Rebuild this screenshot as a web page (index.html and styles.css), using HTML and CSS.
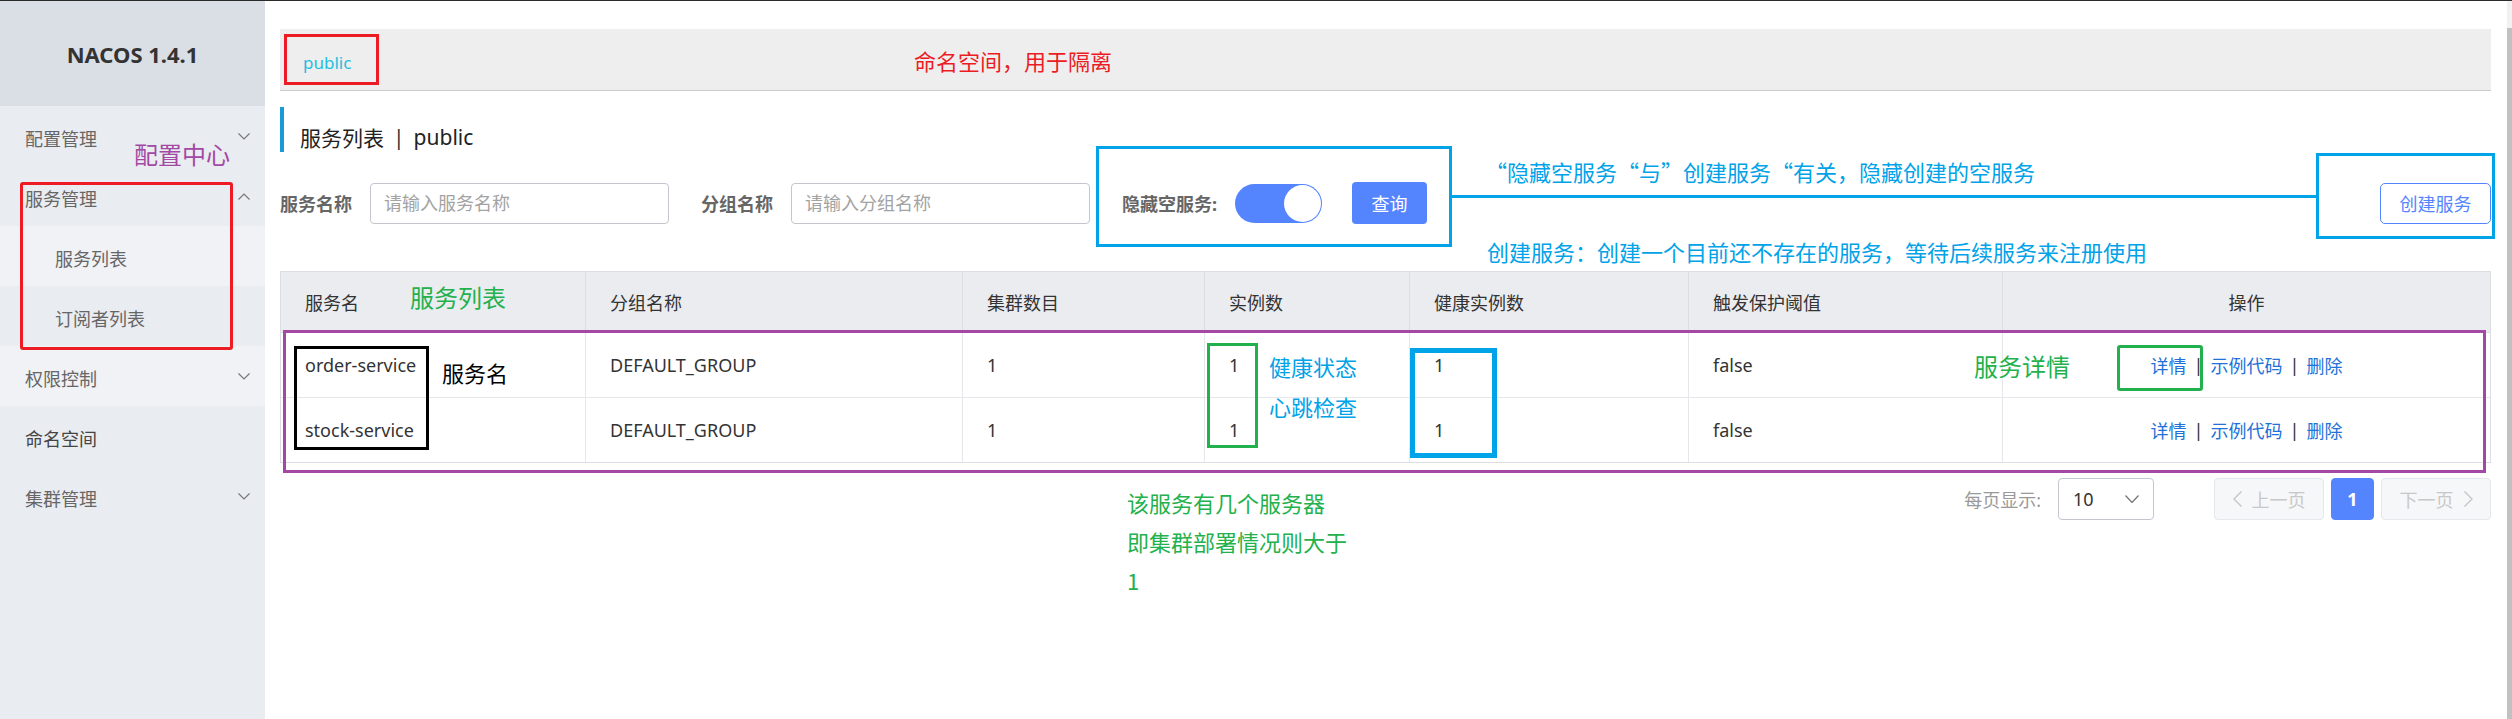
FILE: index.html
```html
<!DOCTYPE html>
<html lang="zh-CN">
<head>
<meta charset="utf-8">
<title>NACOS 1.4.1 - 服务列表</title>
<link rel="stylesheet" href="styles.css">
</head>
<body>
<div class="app">
  <aside class="sidebar">
    <div class="brand">NACOS 1.4.1</div>
    <nav class="menu">
      <div class="menu-item">配置管理<svg class="chev" viewBox="0 0 12 7"><polyline points="0.5,0.5 6,6 11.5,0.5"/></svg></div>
      <div class="menu-item">服务管理<svg class="chev" viewBox="0 0 12 7"><polyline points="0.5,6.5 6,1 11.5,6.5"/></svg></div>
      <div class="sub-item current">服务列表</div>
      <div class="sub-item">订阅者列表</div>
      <div class="menu-item hover">权限控制<svg class="chev" viewBox="0 0 12 7"><polyline points="0.5,0.5 6,6 11.5,0.5"/></svg></div>
      <div class="menu-item strong">命名空间</div>
      <div class="menu-item">集群管理<svg class="chev" viewBox="0 0 12 7"><polyline points="0.5,0.5 6,6 11.5,0.5"/></svg></div>
    </nav>
  </aside>

  <main class="main">
    <div class="ns-bar"><span class="ns-link">public</span></div>

    <h1 class="page-title">服务列表<span class="title-sep">|</span>public</h1>

    <div class="filters">
      <span class="f-label">服务名称</span>
      <input class="f-input" type="text" placeholder="请输入服务名称">
      <span class="f-label f-next">分组名称</span>
      <input class="f-input" type="text" placeholder="请输入分组名称">
      <span class="f-label f-next">隐藏空服务:</span>
      <span class="switch"><span class="knob"></span></span>
      <button class="btn-primary">查询</button>
      <button class="btn-outline">创建服务</button>
    </div>

    <div class="table">
      <div class="tr th">
        <div class="td">服务名</div>
        <div class="td">分组名称</div>
        <div class="td">集群数目</div>
        <div class="td">实例数</div>
        <div class="td">健康实例数</div>
        <div class="td">触发保护阈值</div>
        <div class="td ops">操作</div>
      </div>
      <div class="tr row">
        <div class="td">order-service</div>
        <div class="td">DEFAULT_GROUP</div>
        <div class="td">1</div>
        <div class="td">1</div>
        <div class="td">1</div>
        <div class="td">false</div>
        <div class="td ops"><a class="link">详情</a><span class="sep">|</span><a class="link">示例代码</a><span class="sep">|</span><a class="link">删除</a></div>
      </div>
      <div class="tr row last">
        <div class="td">stock-service</div>
        <div class="td">DEFAULT_GROUP</div>
        <div class="td">1</div>
        <div class="td">1</div>
        <div class="td">1</div>
        <div class="td">false</div>
        <div class="td ops"><a class="link">详情</a><span class="sep">|</span><a class="link">示例代码</a><span class="sep">|</span><a class="link">删除</a></div>
      </div>
    </div>

    <div class="pager">
      <span class="pg-label">每页显示:</span>
      <div class="pg-select"><span>10</span><svg class="pg-chev" viewBox="0 0 14 8"><polyline points="0.5,0.5 7,7.5 13.5,0.5"/></svg></div>
      <div class="pg-btn pg-prev"><svg class="pg-arrow" viewBox="0 0 9 16"><polyline points="8.5,0.5 1,8 8.5,15.5"/></svg><span>上一页</span></div>
      <div class="pg-btn pg-cur">1</div>
      <div class="pg-btn pg-next"><span>下一页</span><svg class="pg-arrow" viewBox="0 0 9 16"><polyline points="0.5,0.5 8,8 0.5,15.5"/></svg></div>
    </div>
  </main>

  <div class="scrollbar"><div class="thumb"></div></div>
</div>

<div class="notes">
  <div class="box b-ns"></div>
  <div class="note n-red">命名空间，用于隔离</div>
  <div class="note n-purple">配置中心</div>
  <div class="box b-side"></div>
  <div class="box b-filter"></div>
  <div class="b-line"></div>
  <div class="box b-create"></div>
  <div class="note n-blue1">“隐藏空服务“与”创建服务“有关，隐藏创建的空服务</div>
  <div class="note n-blue2">创建服务：创建一个目前还不存在的服务，等待后续服务来注册使用</div>
  <div class="note n-green-list">服务列表</div>
  <div class="box b-table"></div>
  <div class="box b-name"></div>
  <div class="note n-name">服务名</div>
  <div class="box b-inst"></div>
  <div class="note n-health">健康状态<br>心跳检查</div>
  <div class="box b-healthy"></div>
  <div class="note n-detail">服务详情</div>
  <div class="box b-detail"></div>
  <div class="note n-cluster">该服务有几个服务器<br>即集群部署情况则大于<br>1</div>
</div>
</body>
</html>
```

FILE: styles.css
```css
* { box-sizing: border-box; }
html, body { margin: 0; padding: 0; }
body {
  position: relative;
  width: 2512px;
  height: 719px;
  overflow: hidden;
  background: #fff;
  color: #333;
  font-family: "Noto Sans", "Noto Sans CJK SC", sans-serif;
}

.app {
  display: flex;
  height: 719px;
  border-top: 1px solid #2b2b2b;
}

/* ---------- sidebar ---------- */
.sidebar {
  flex: none;
  width: 265px;
  background: #e9ecf1;
  display: flex;
  flex-direction: column;
}
.brand {
  height: 105px;
  background: #dadee5;
  display: flex;
  align-items: center;
  justify-content: center;
  font-size: 22px;
  font-weight: 700;
  color: #333;
}
.menu { display: flex; flex-direction: column; }
.menu-item, .sub-item {
  height: 60px;
  display: flex;
  align-items: center;
  justify-content: space-between;
  padding: 4px 15px 0 25px;
  font-size: 18px;
  color: #666;
}
.sub-item { padding-left: 55px; }
.sub-item.current, .menu-item.hover { background: #f0f2f6; }
.menu-item.strong { color: #444; }
.chev {
  width: 12px;
  height: 7px;
  margin-bottom: 4px;
  fill: none;
  stroke: #777;
  stroke-width: 1.2;
}

/* ---------- main ---------- */
.main {
  flex: 1;
  min-width: 0;
  padding: 28px 16px 0 15px;
}
.ns-bar {
  height: 62px;
  background: #eeeeee;
  border-bottom: 1px solid #cccccc;
  display: flex;
  align-items: center;
  padding: 6px 0 0 23px;
}
.ns-link { color: #1cc0e0; font-size: 17px; }

.page-title {
  margin: 16px 0 0;
  height: 45px;
  border-left: 4px solid #1a9bd7;
  padding: 15px 0 0 16px;
  display: flex;
  align-items: center;
  font-size: 21px;
  font-weight: 400;
  color: #222;
}
.title-sep { margin: 0 9px; color: #333; }

.filters {
  margin-top: 30px;
  height: 42px;
  display: flex;
  align-items: center;
}
.f-label {
  font-size: 18px;
  font-weight: 700;
  color: #666;
  margin-right: 18px;
}
.f-next { margin-left: 32px; }
.f-input {
  width: 299px;
  height: 41px;
  border: 1px solid #c4c6cf;
  border-radius: 4px;
  padding: 0 13px;
  font-family: inherit;
  font-size: 18px;
  color: #333;
  outline: none;
  background: #fff;
}
.f-input::placeholder { color: #a3a3a3; }
.switch {
  width: 87px;
  height: 39px;
  border-radius: 20px;
  background: #5584ff;
  display: flex;
  justify-content: flex-end;
  align-items: center;
  padding: 0 1px;
  margin-right: 30px;
}
.knob {
  width: 37px;
  height: 37px;
  border-radius: 50%;
  background: #fff;
}
.btn-primary {
  width: 75px;
  height: 42px;
  border: none;
  border-radius: 4px;
  background: #5584ff;
  color: #fff;
  font-family: inherit;
  font-size: 18px;
}
.btn-outline {
  margin-left: auto;
  width: 111px;
  height: 41px;
  border: 1px solid #5584ff;
  border-radius: 5px;
  background: #fff;
  color: #5584ff;
  font-family: inherit;
  font-size: 18px;
}

/* ---------- table ---------- */
.table {
  margin-top: 47px;
  border: 1px solid #dcdee3;
}
.tr {
  display: grid;
  grid-template-columns: 304px 377px 242px 205px 279px 314px 1fr;
}
.th {
  height: 61px;
  background: #ebecf0;
  border-bottom: 1px solid #dcdee3;
}
.row { height: 65px; border-bottom: 1px solid #e6e7eb; }
.row.last { height: 64px; border-bottom: none; }
.td {
  display: flex;
  align-items: center;
  padding: 0 24px;
  font-size: 18px;
  color: #333;
  border-left: 1px solid #e6e7eb;
  white-space: nowrap;
}
.th .td { border-left-color: #dcdee3; }
.td:first-child { border-left: none; }
.td.ops { justify-content: center; }
.link { color: #2271d8; }
.sep { margin: 0 7px; color: #333; }

/* ---------- pager ---------- */
.pager {
  margin-top: 15px;
  height: 42px;
  display: flex;
  justify-content: flex-end;
  align-items: center;
}
.pg-label { color: #999; font-size: 18px; margin-right: 17px; }
.pg-select {
  width: 96px;
  height: 42px;
  border: 1px solid #c4c6cf;
  border-radius: 4px;
  display: flex;
  align-items: center;
  justify-content: space-between;
  padding: 0 14px;
  font-size: 18px;
  color: #333;
  margin-right: 60px;
}
.pg-chev { width: 14px; height: 8px; fill: none; stroke: #777; stroke-width: 1.3; }
.pg-btn {
  height: 42px;
  border: 1px solid #e6e7eb;
  background: #f6f7f9;
  border-radius: 4px;
  color: #c8c8c8;
  font-size: 18px;
  display: flex;
  align-items: center;
  justify-content: center;
}
.pg-prev, .pg-next { width: 110px; gap: 10px; }
.pg-arrow { width: 9px; height: 16px; fill: none; stroke: #c8c8c8; stroke-width: 1.5; }
.pg-cur {
  width: 43px;
  margin: 0 7px;
  background: #5584ff;
  border-color: #5584ff;
  color: #fff;
  font-weight: 700;
}

/* ---------- scrollbar ---------- */
.scrollbar {
  flex: none;
  width: 5px;
  background: #f1f1f1;
  padding-top: 27px;
}
.thumb { height: 100%; background: #c1c1c1; }

/* ---------- annotations ---------- */
.notes { position: absolute; left: 0; top: 0; }
.note {
  position: absolute;
  font-family: "Noto Sans CJK SC", sans-serif;
  font-size: 22px;
  line-height: 1;
  white-space: nowrap;
}
.box { position: absolute; border-style: solid; }

.b-ns { left: 284px; top: 34px; width: 95px; height: 51px; border-width: 3px; border-color: #ed1c24; }
.n-red { left: 914px; top: 49px; color: #ed1c24; }
.n-purple { left: 134px; top: 142px; font-size: 24px; color: #a349a4; }
.b-side { left: 20px; top: 182px; width: 213px; height: 168px; border-width: 3px; border-color: #ed1c24; border-radius: 3px; }

.b-filter { left: 1096px; top: 146px; width: 356px; height: 101px; border-width: 3px; border-color: #00a2e8; }
.b-line { position: absolute; left: 1452px; top: 195px; width: 864px; height: 3px; background: #00a2e8; }
.b-create { left: 2316px; top: 153px; width: 179px; height: 86px; border-width: 3px; border-color: #00a2e8; }
.n-blue1 { left: 1485px; top: 160px; color: #00a2e8; }
.n-blue2 { left: 1487px; top: 240px; color: #00a2e8; }

.n-green-list { left: 410px; top: 285px; font-size: 24px; color: #22b14c; }
.b-table { left: 283px; top: 330px; width: 2203px; height: 143px; border-width: 3px; border-color: #a349a4; }
.b-name { left: 294px; top: 346px; width: 135px; height: 104px; border-width: 3px; border-color: #000; }
.n-name { left: 442px; top: 361px; color: #000; }
.b-inst { left: 1207px; top: 343px; width: 51px; height: 105px; border-width: 3px; border-color: #22b14c; }
.n-health { left: 1269px; top: 346px; line-height: 40px; color: #00a2e8; }
.b-healthy { left: 1410px; top: 348px; width: 87px; height: 110px; border-width: 5px; border-color: #00a2e8; }
.n-detail { left: 1974px; top: 354px; font-size: 24px; color: #22b14c; }
.b-detail { left: 2117px; top: 345px; width: 86px; height: 46px; border-width: 3px; border-color: #22b14c; border-radius: 3px; }
.n-cluster { left: 1127px; top: 483px; line-height: 39px; color: #22b14c; }
```
